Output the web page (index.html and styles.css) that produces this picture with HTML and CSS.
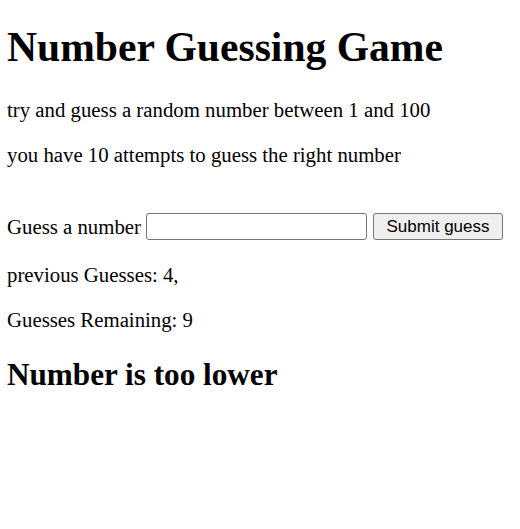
FILE: index.html
```html
<!DOCTYPE html>
<html>
<head>
<meta charset="utf-8">
<link rel="stylesheet" href="styles.css">
</head>
<body>
<h1 class="title">Number Guessing Game</h1>
<p class="text">try and guess a random number between 1 and 100</p>
<p class="text">you have 10 attempts to guess the right number</p>
<form class="guess-form">
  <label class="label" for="guessField">Guess a number</label>
  <input class="guess-field" type="text" id="guessField">
  <button class="submit" type="button">Submit guess</button>
</form>
<div class="results">
  <p class="text">previous Guesses: 4,</p>
  <p class="text">Guesses Remaining: 9</p>
  <h2 class="result">Number is too lower</h2>
</div>
</body>
</html>
```
FILE: styles.css
```css
html, body {
  background: #fff;
}
body {
  margin: 8px 8px 8px 7px;
  font-family: "Liberation Serif", "Times New Roman", serif;
  color: #000;
}
.title {
  font-size: 41.6px;
  font-weight: bold;
  line-height: 46px;
  margin: 16px 0 27px;
}
.text {
  font-size: 20.8px;
  line-height: 25px;
  margin: 20px 0;
}
.guess-form {
  display: flex;
  align-items: center;
  gap: 5px;
  margin: 46px 0 22px;
  font-size: 20.8px;
}
.label {
  line-height: 25px;
}
.guess-field {
  width: 221px;
  height: 27px;
  box-sizing: border-box;
  border: 1px solid #767676;
  border-radius: 3px;
  padding: 1px 4px;
  font-size: 16px;
}
.submit {
  width: 130px;
  height: 27px;
  box-sizing: border-box;
  border: 1px solid #767676;
  border-radius: 3px;
  background: #efefef;
  font-family: Arial, "Liberation Sans", sans-serif;
  font-size: 17px;
  padding: 0;
  margin-left: 1px;
  color: #000;
}
.result {
  font-size: 31.2px;
  line-height: 35px;
  font-weight: bold;
  margin: 25px 0;
}
```
